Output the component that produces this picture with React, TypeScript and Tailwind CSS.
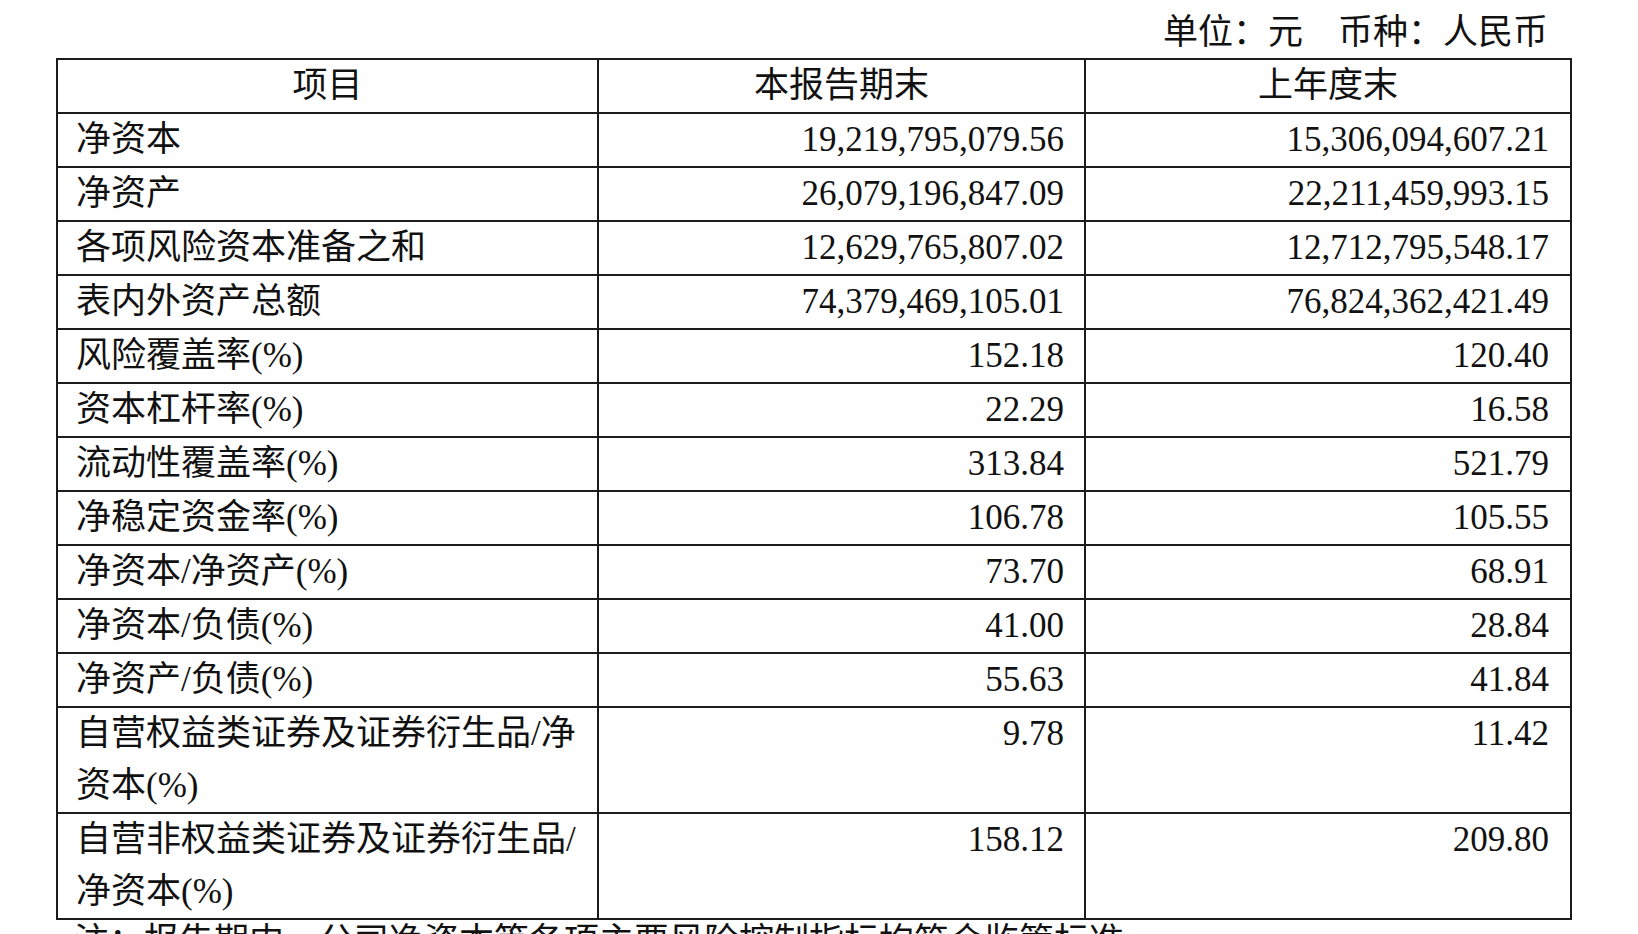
import React from 'react';

type Row = { label: React.ReactNode; cur: string; prev: string; tall?: boolean };

const rows: Row[] = [
  { label: '净资本', cur: '19,219,795,079.56', prev: '15,306,094,607.21' },
  { label: '净资产', cur: '26,079,196,847.09', prev: '22,211,459,993.15' },
  { label: '各项风险资本准备之和', cur: '12,629,765,807.02', prev: '12,712,795,548.17' },
  { label: '表内外资产总额', cur: '74,379,469,105.01', prev: '76,824,362,421.49' },
  { label: '风险覆盖率(%)', cur: '152.18', prev: '120.40' },
  { label: '资本杠杆率(%)', cur: '22.29', prev: '16.58' },
  { label: '流动性覆盖率(%)', cur: '313.84', prev: '521.79' },
  { label: '净稳定资金率(%)', cur: '106.78', prev: '105.55' },
  { label: '净资本/净资产(%)', cur: '73.70', prev: '68.91' },
  { label: '净资本/负债(%)', cur: '41.00', prev: '28.84' },
  { label: '净资产/负债(%)', cur: '55.63', prev: '41.84' },
  {
    label: (
      <>
        自营权益类证券及证券衍生品/净
        <br />
        资本(%)
      </>
    ),
    cur: '9.78',
    prev: '11.42',
    tall: true,
  },
  {
    label: (
      <>
        自营非权益类证券及证券衍生品/
        <br />
        净资本(%)
      </>
    ),
    cur: '158.12',
    prev: '209.80',
    tall: true,
  },
];

const App: React.FC = () => {
  return (
    <div className="min-h-screen bg-white text-[#111] font-['Liberation_Serif','Noto_Sans_CJK_SC',serif] text-[35px]">
      <div className="pl-[56px] pt-[6px] w-[1570px]">
        <div className="text-right pr-[22px] pt-[2px] leading-[50px]">单位：元　币种：人民币</div>

        <table className="w-[1514px] border-collapse border-2 border-[#1c1c1c] table-fixed">
          <colgroup>
            <col className="w-[541px]" />
            <col className="w-[487px]" />
            <col className="w-[486px]" />
          </colgroup>
          <thead>
            <tr className="h-[54px]">
              <th className="border-2 border-[#1c1c1c] font-normal leading-[52px] p-0 text-center">项目</th>
              <th className="border-2 border-[#1c1c1c] font-normal leading-[52px] p-0 text-center">本报告期末</th>
              <th className="border-2 border-[#1c1c1c] font-normal leading-[52px] p-0 text-center">上年度末</th>
            </tr>
          </thead>
          <tbody>
            {rows.map((r, i) => (
              <tr key={i} className={r.tall ? 'h-[106px]' : 'h-[54px]'}>
                <td className="border-2 border-[#1c1c1c] align-top leading-[52px] p-0 pl-[18px] pr-[4px] whitespace-nowrap">
                  {r.label}
                </td>
                <td className="border-2 border-[#1c1c1c] align-top leading-[52px] p-0 pr-[20px] text-right">
                  {r.cur}
                </td>
                <td className="border-2 border-[#1c1c1c] align-top leading-[52px] p-0 pr-[21px] text-right">
                  {r.prev}
                </td>
              </tr>
            ))}
          </tbody>
        </table>

        <p className="leading-[44px] pl-[18px]">注：报告期内，公司净资本等各项主要风险控制指标均符合监管标准。</p>
      </div>
    </div>
  );
};

export default App;
